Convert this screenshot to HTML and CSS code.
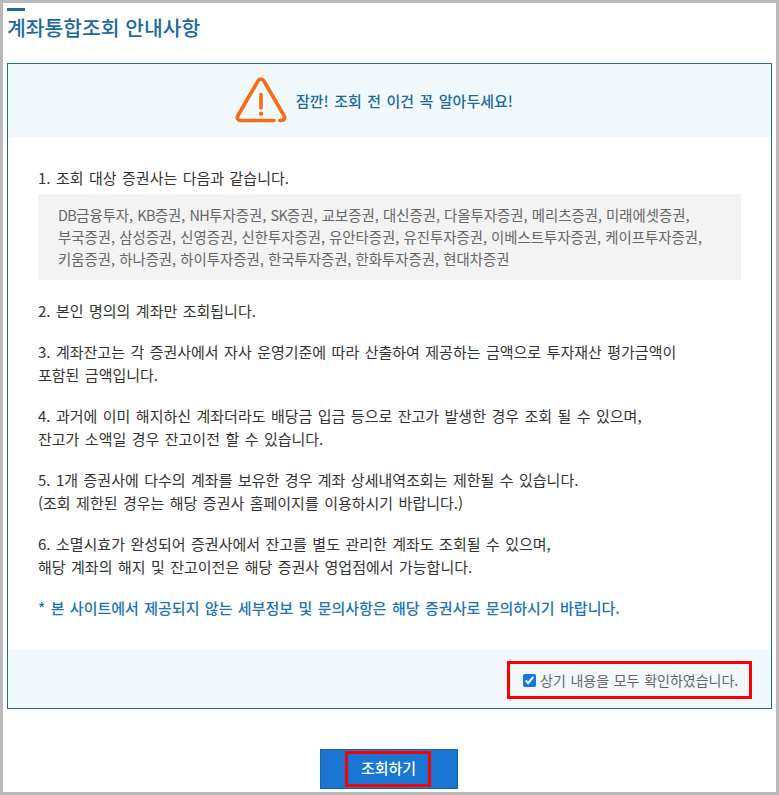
FILE: index.html
```html
<!DOCTYPE html>
<html lang="ko">
<head>
<meta charset="utf-8">
<title>계좌통합조회 안내사항</title>
<link rel="stylesheet" href="styles.css">
</head>
<body>
<div class="frame">
  <div class="title-bar"></div>
  <h1 class="title">계좌통합조회 안내사항</h1>
  <section class="panel">
    <header class="panel-head">
      <svg class="warn" width="52" height="46" viewBox="0 0 52 46" fill="none" stroke="#f96a12" stroke-width="3.6" stroke-linecap="round" stroke-linejoin="round">
        <path d="M39 43.5H5.5c-2.6 0-4-2.4-2.8-4.5L23.2 3.6c1.3-2.2 4.2-2.2 5.5 0L49.2 39c1.2 2.1-.2 4.5-2.8 4.5h-1.6"/>
        <path d="M26 17.5v13.5"/>
        <path d="M26 36.6v.4" stroke-width="4"/>
      </svg>
      <span class="panel-head-text">잠깐! 조회 전 이건 꼭 알아두세요!</span>
    </header>
    <div class="panel-body">
      <p class="item">1. 조회 대상 증권사는 다음과 같습니다.</p>
      <div class="brokers"><span class="latin">DB</span>금융투자, <span class="latin">KB</span>증권, <span class="latin">NH</span>투자증권, <span class="latin">SK</span>증권, 교보증권, 대신증권, 다올투자증권, 메리츠증권, 미래에셋증권,<br>부국증권, 삼성증권, 신영증권, 신한투자증권, 유안타증권, 유진투자증권, 이베스트투자증권, 케이프투자증권,<br>키움증권, 하나증권, 하이투자증권, 한국투자증권, 한화투자증권, 현대차증권</div>
      <p class="item">2. 본인 명의의 계좌만 조회됩니다.</p>
      <p class="item">3. 계좌잔고는 각 증권사에서 자사 운영기준에 따라 산출하여 제공하는 금액으로 투자재산 평가금액이<br>포함된 금액입니다.</p>
      <p class="item">4. 과거에 이미 해지하신 계좌더라도 배당금 입금 등으로 잔고가 발생한 경우 조회 될 수 있으며,<br>잔고가 소액일 경우 잔고이전 할 수 있습니다.</p>
      <p class="item">5. 1개 증권사에 다수의 계좌를 보유한 경우 계좌 상세내역조회는 제한될 수 있습니다.<br>(조회 제한된 경우는 해당 증권사 홈페이지를 이용하시기 바랍니다.)</p>
      <p class="item">6. 소멸시효가 완성되어 증권사에서 잔고를 별도 관리한 계좌도 조회될 수 있으며,<br>해당 계좌의 해지 및 잔고이전은 해당 증권사 영업점에서 가능합니다.</p>
      <p class="item note">* 본 사이트에서 제공되지 않는 세부정보 및 문의사항은 해당 증권사로 문의하시기 바랍니다.</p>
    </div>
    <footer class="panel-foot">
      <label class="confirm"><input class="confirm-box" type="checkbox" checked><span>상기 내용을 모두 확인하였습니다.</span></label>
    </footer>
  </section>
  <div class="actions">
    <button class="submit" type="button"><span class="submit-label">조회하기</span></button>
  </div>
</div>
</body>
</html>
```

FILE: styles.css
```css
* { box-sizing: border-box; }
html, body { margin: 0; padding: 0; background: #fff; }
body {
  font-family: "Noto Sans CJK KR", "Noto Sans", sans-serif;
  color: #333;
  overflow: hidden;
}
.frame {
  width: 779px;
  height: 795px;
  border: 3px solid #b9b9b9;
  padding: 5px 4px 0 4px;
  overflow: hidden;
}
.title-bar { width: 18px; height: 3px; background: #1a6a9e; }
.title {
  margin: 0;
  height: 52px;
  font-size: 20.4px;
  line-height: 32px;
  font-weight: 500;
  color: #1a6a9e;
}
.panel { width: 765px; height: 646px; border: 1px solid #1b6b9c; display: flex; flex-direction: column; }
.panel-head {
  height: 73px;
  background: #f2f9fd;
  display: flex;
  align-items: center;
  justify-content: center;
  gap: 9px;
  padding: 0 31px 2px 0;
}
.warn { display: block; }
.panel-head-text { font-size: 15px; font-weight: 500; color: #1a6a9e; line-height: 22px; margin-top: 2px; word-spacing: 1.25px; }
.panel-body { flex: 1; padding: 30px 30px 0 30px; }
.item { margin: 0 0 19px; font-size: 15px; line-height: 22.5px; color: #333; word-spacing: 1.25px; }
.item:first-child { margin-bottom: 4px; }
.brokers {
  width: 703px;
  height: 86px;
  margin-bottom: 20px;
  padding: 10px 0 0 20px;
  background: #f3f3f3;
  font-size: 14.4px;
  line-height: 22px;
  color: #666;
  word-spacing: 0.15px;
  white-space: nowrap;
}
.latin { letter-spacing: -0.6px; }
.note { color: #1a74b8; font-weight: 500; word-spacing: 1.2px; }
.panel-foot {
  height: 58px;
  background: #f2f9fd;
  display: flex;
  justify-content: flex-end;
  padding: 11px 19px 0 0;
}
.confirm {
  width: 245px;
  height: 38px;
  border: 3px solid #f00;
  display: flex;
  align-items: center;
  gap: 4px;
  padding-left: 13px;
  font-size: 14px;
  color: #666;
  word-spacing: 0.75px;
  white-space: nowrap;
}
.confirm-box { width: 13px; height: 13px; margin: 0; accent-color: #1473e6; }
.actions { display: flex; justify-content: flex-start; padding: 40px 0 0 313px; }
.submit {
  width: 138px;
  height: 40px;
  margin: 0;
  padding: 0;
  background: #1976d2;
  border: 1px solid #17659f;
  display: flex;
  align-items: center;
  justify-content: center;
  font-family: inherit;
}
.submit-label {
  width: 86px;
  height: 36px;
  margin-left: -2px;
  padding-left: 1px;
  border: 3px solid #f00;
  color: #fff;
  font-size: 15px;
  font-weight: 500;
  line-height: 28px;
  text-align: center;
}
```
